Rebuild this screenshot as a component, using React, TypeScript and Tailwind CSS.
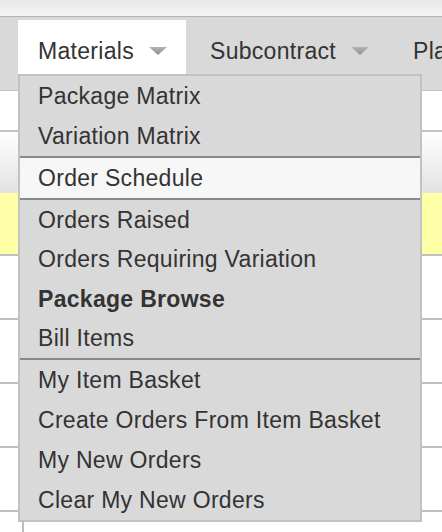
const menu: { label: string; bold?: boolean; active?: boolean }[][] = [
  [{ label: "Package Matrix" }, { label: "Variation Matrix" }],
  [{ label: "Order Schedule", active: true }],
  [
    { label: "Orders Raised" },
    { label: "Orders Requiring Variation" },
    { label: "Package Browse", bold: true },
    { label: "Bill Items" },
  ],
  [
    { label: "My Item Basket" },
    { label: "Create Orders From Item Basket" },
    { label: "My New Orders" },
    { label: "Clear My New Orders" },
  ],
];

function Caret() {
  return (
    <svg width="18" height="8" viewBox="0 0 18 8" className="ml-[15px] shrink-0">
      <defs>
        <linearGradient id="cg" x1="0" y1="0" x2="0" y2="1">
          <stop offset="0" stopColor="#b4b4b4" />
          <stop offset="1" stopColor="#8e8e8e" />
        </linearGradient>
      </defs>
      <polygon points="0,0 18,0 9,8" fill="url(#cg)" />
    </svg>
  );
}

export default function App() {
  return (
    <div className="relative h-[532px] w-[442px] overflow-hidden bg-white font-['Liberation_Sans',Arial,sans-serif] text-[#333]">
      {/* window top */}
      <div className="h-4 bg-gradient-to-b from-[#e8e8e8] to-[#f4f4f4]" />
      <div className="h-px bg-[#b2b2b2]" />

      {/* nav bar */}
      <div className="flex h-[73px] items-start bg-[#d9d9d9] pt-[3px] text-[23px] tracking-[0.3px]">
        <div className="ml-[18px] flex h-[54px] w-[168px] shrink-0 items-center bg-white pl-5 pt-2">
          <span>Materials</span>
          <Caret />
        </div>
        <div className="flex h-[54px] shrink-0 items-center pl-6 pr-6 pt-2">
          <span>Subcontract</span>
          <Caret />
        </div>
        <div className="flex h-[54px] shrink-0 items-center whitespace-nowrap pl-5 pt-2">
          <span>Planning</span>
        </div>
      </div>
      <div className="h-px bg-[#c6c6c6]" />

      {/* page rows behind the menu */}
      <div className="h-[41px] border-b-2 border-[#c4c4c4]" />
      <div className="h-[61px] bg-gradient-to-b from-white to-[#e2e2e2]" />
      <div className="h-[63px] border-b-2 border-[#c0c0c0] bg-[#ffffa8]" />
      <div className="h-16 border-b-2 border-[#c0c0c0]" />
      <div className="h-16 border-b-2 border-[#c0c0c0]" />
      <div className="h-16 border-b-2 border-[#c0c0c0]" />
      <div className="h-16 border-b-2 border-[#c0c0c0]" />
      <div className="absolute left-[22px] top-[522px] h-3 w-[2px] bg-[#bdbdbd]" />

      {/* dropdown */}
      <div className="absolute left-[18px] top-[74px] w-[404px] border-2 border-[#c2c2c2] bg-[#d9d9d9] text-[23px] tracking-[0.3px]">
        {menu.map((group, gi) => (
          <div key={gi} className={gi > 0 ? "border-t-2 border-[#888]" : ""}>
            {group.map((item) => (
              <div
                key={item.label}
                className={
                  "flex items-center whitespace-nowrap pl-[18px] " +
                  (gi === 2 ? "h-[39.5px] " : "h-10 ") +
                  (item.active ? "bg-[#f7f7f7] " : "") +
                  (item.bold ? "font-bold" : "")
                }
              >
                {item.label}
              </div>
            ))}
          </div>
        ))}
      </div>
    </div>
  );
}
